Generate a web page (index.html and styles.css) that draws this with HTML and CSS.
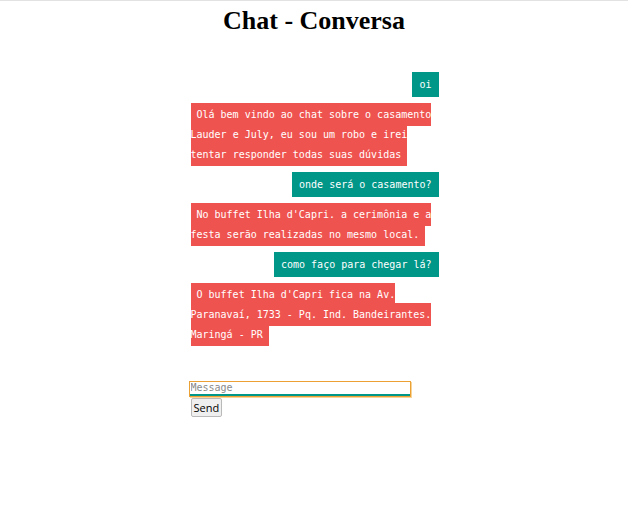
FILE: index.html
```html
<!DOCTYPE html>
<html lang="pt">
<head>
<meta charset="utf-8">
<title>Chat - Conversa</title>
<link rel="stylesheet" href="styles.css">
</head>
<body>
<h1 class="title">Chat - Conversa</h1>
<div class="chat">
  <div class="msg user"><span class="bubble">oi</span></div>
  <div class="msg bot"><span class="bubble">Olá bem vindo ao chat sobre o casamento Lauder e July, eu sou um robo e irei tentar responder todas suas dúvidas</span></div>
  <div class="msg user"><span class="bubble">onde será o casamento?</span></div>
  <div class="msg bot"><span class="bubble">No buffet Ilha d'Capri. a cerimônia e a festa serão realizadas no mesmo local.</span></div>
  <div class="msg user"><span class="bubble">como faço para chegar lá?</span></div>
  <div class="msg bot"><span class="bubble">O buffet Ilha d'Capri fica na Av. Paranavaí, 1733 - Pq. Ind. Bandeirantes. Maringá - PR</span></div>
</div>
<form class="composer">
  <input class="composer-input" type="text" placeholder="Message">
  <button class="composer-send" type="button">Send</button>
</form>
</body>
</html>
```
FILE: styles.css
```css
html, body {
  margin: 0;
  padding: 0;
  background: #fff;
}
body {
  border-top: 1px solid #e2e2e2;
  font-family: "DejaVu Sans Mono", "Liberation Mono", monospace;
  font-size: 10px;
}
.title {
  font-family: "Liberation Serif", "Times New Roman", serif;
  font-weight: bold;
  font-size: 26px;
  text-align: center;
  margin: 5px 0 0;
  color: #000;
}
.chat {
  width: 248px;
  padding-left: 1px;
  margin: 36px auto 0;
  display: flex;
  flex-direction: column;
  gap: 7.5px;
}
.msg.user {
  display: flex;
  justify-content: flex-end;
}
.msg.user .bubble {
  background: #009688;
  color: #fff;
  line-height: 25px;
  padding: 0 7px;
}
.msg.bot {
  line-height: 20px;
}
.msg.bot .bubble {
  background: #ef5350;
  color: #fff;
  padding: 6px;
}
.composer {
  width: 248px;
  padding-left: 1px;
  margin: 37px auto 0;
  display: flex;
  flex-direction: column;
  align-items: flex-start;
}
.composer-input {
  width: 220px;
  height: 14px;
  box-sizing: border-box;
  margin: 0 0 0 -1px;
  padding: 0 1px;
  border: none;
  border-bottom: 2px solid #009688;
  outline: 1px solid #eba134;
  box-shadow: 1px 1px 0 1px #f7d49a;
  font-family: "DejaVu Sans Mono", "Liberation Mono", monospace;
  font-size: 10px;
  color: #333;
  background: #fff;
}
.composer-input::placeholder {
  color: #8a8a8a;
}
.composer-send {
  margin: 2px 0 0;
  padding: 1px 2px;
  font-family: "Open Sans", "Liberation Sans", sans-serif;
  font-size: 11px;
  line-height: 15px;
  color: #000;
  background: #efefef;
  border: 1px solid #b9b9b9;
  border-radius: 2px;
}
```
